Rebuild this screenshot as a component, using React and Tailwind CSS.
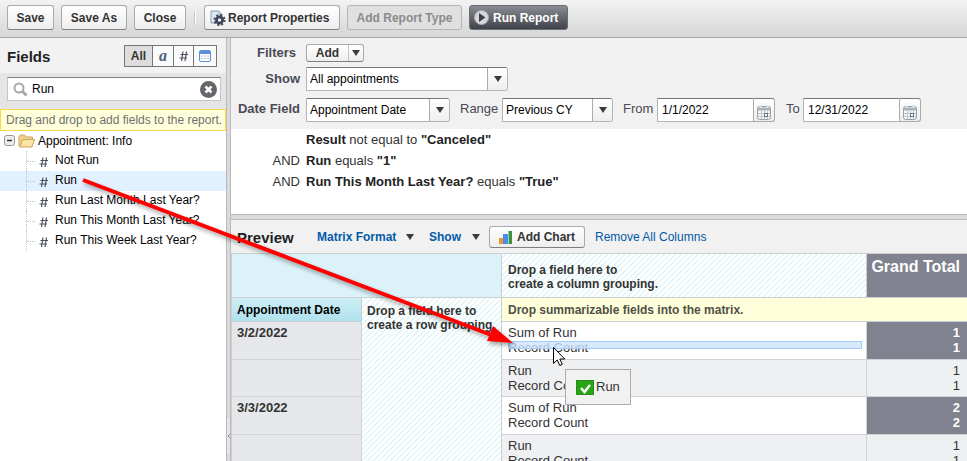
import { ChevronLeft } from 'lucide-react'

const fields = [
  'Not Run',
  'Run',
  'Run Last Month Last Year?',
  'Run This Month Last Year?',
  'Run This Week Last Year?'
]

const conditions = [
  { join: '', field: 'Result', op: 'not equal to', value: '"Canceled"' },
  { join: 'AND', field: 'Run', op: 'equals', value: '"1"' },
  { join: 'AND', field: 'Run This Month Last Year?', op: 'equals', value: '"True"' }
]

const rows = [
  { date: '3/2/2022', lines: ['Sum of Run', 'Record Count'], totals: [1, 1], summary: true, dropTarget: true },
  { date: '', lines: ['Run', 'Record Count'], totals: [1, 1] },
  { date: '3/3/2022', lines: ['Sum of Run', 'Record Count'], totals: [2, 2], summary: true },
  { date: '', lines: ['Run', 'Record Count'], totals: [1, 1] }
]

const hatch = 'bg-[repeating-linear-gradient(135deg,#ffffff_0px,#ffffff_2px,#d5f1f6_3px,#ffffff_4px)]'

function Caret() {
  return (
    <svg width="8" height="6" viewBox="0 0 8 6" className="shrink-0">
      <path d="M0 0h8L4 6z" fill="#3b3b3f" />
    </svg>
  )
}

function Hash() {
  return (
    <svg width="10" height="12" viewBox="0 0 10 12" className="shrink-0">
      <path d="M4 1.500L2.500 11M7.500 1.500L6 11M1.500 4.500H9M.5 8H8" stroke="#4a5160" strokeWidth="1.200" fill="none" />
    </svg>
  )
}

function PropertiesIcon() {
  return (
    <svg width="16" height="16" viewBox="0 0 16 16">
      <path d="M1 1h8l3 3v9H1z" fill="#dce8f3" stroke="#8fa0b2" />
      <path d="M9 1v3h3" fill="#fff" stroke="#8fa0b2" />
      <circle cx="9.500" cy="10" r="5" fill="none" stroke="#414757" strokeWidth="2" strokeDasharray="2 1.930" />
      <circle cx="9.500" cy="10" r="3" fill="none" stroke="#414757" strokeWidth="3" />
      <circle cx="9.500" cy="10" r="1.600" fill="#f3f4f6" />
    </svg>
  )
}

function CalendarIcon() {
  return (
    <svg width="14" height="15" viewBox="0 0 14 15">
      <rect x=".5" y="1.500" width="13" height="13" rx="2" fill="#f3f5f7" stroke="#98a0a8" />
      <path d="M1 2.500h12v3H1z" fill="#a9b1b9" />
      <path d="M3.500 0v3M10.500 0v3" stroke="#dfe5e9" strokeWidth="2" />
      <path d="M1 8.500h12M1 11.500h12M4.500 6v8M7.500 6v8M10.500 6v8" stroke="#b9c8d1" />
      <rect x="7.500" y="8.500" width="3" height="3" fill="#fff" stroke="#6e757c" />
    </svg>
  )
}

function ToolButton({ className = '', disabled = false, children }) {
  const look = disabled
    ? 'border-[#b5b5b5] bg-[#e0e0e0] text-[#8b8b8b]'
    : 'border-[#a9a9ab] border-b-[#7f7f7f] bg-linear-to-b from-white to-[#eeeeef] text-[#333333]'

  return (
    <button
      disabled={disabled}
      className={`h-[25px] shrink-0 rounded-[3px] border text-center text-xs font-bold whitespace-nowrap ${look} ${className}`}
    >
      {children}
    </button>
  )
}

function Select({ id, value, className }) {
  return (
    <div className={`relative h-6 shrink-0 ${className}`}>
      <select
        id={id}
        defaultValue={value}
        className="h-full w-full appearance-none rounded-r-[3px] border border-[#b5b5b8] border-t-[#77777b] bg-white pr-6 pl-[3px] text-xs text-black"
      >
        <option>{value}</option>
      </select>
      <span className="pointer-events-none absolute inset-y-px right-px flex w-5 items-center justify-center rounded-r-[2px] border-l border-[#aaaaad] bg-linear-to-b from-white to-[#eeeeee]">
        <Caret />
      </span>
    </div>
  )
}

function DateInput({ id, value }) {
  return (
    <div className="flex h-6 w-[118px] shrink-0">
      <input
        id={id}
        defaultValue={value}
        className="min-w-0 flex-1 border border-r-0 border-[#b5b5b8] border-t-[#77777b] bg-white pl-1 text-xs text-black"
      />
      <button
        aria-label="Pick a date"
        className="flex w-[22px] items-center justify-center rounded-r-[3px] border border-[#aaaaad] border-t-[#77777b] bg-linear-to-b from-white to-[#eeeeee] pt-1"
      >
        <CalendarIcon />
      </button>
    </div>
  )
}

function Toolbar() {
  return (
    <header className="flex h-[38px] shrink-0 items-start gap-[7px] border-b border-[#a9a9a9] bg-linear-to-b from-[#f3f3f3] to-[#d6d6d6] px-[7px] pt-[5px]">
      <ToolButton className="w-[47px]">Save</ToolButton>
      <ToolButton className="w-[66px]">Save As</ToolButton>
      <ToolButton className="w-[52px]">Close</ToolButton>
      <span className="mx-px mt-[6px] h-[14px] w-[2px] border-r border-white bg-[#c5c5c5]" />
      <ToolButton className="flex w-[136px] items-center gap-[2px] pl-[5px]">
        <PropertiesIcon />
        Report Properties
      </ToolButton>
      <ToolButton disabled className="w-[115px]">Add Report Type</ToolButton>
      <button className="flex h-[25px] w-[99px] shrink-0 items-center gap-1 rounded-[3px] border border-[#6b6d74] bg-linear-to-b from-[#8b8d96] to-[#41434a] pl-1 text-xs font-bold whitespace-nowrap text-white">
        <svg width="15" height="15" viewBox="0 0 15 15">
          <circle cx="7.500" cy="7.500" r="7" fill="#d8d8da" stroke="#a5a6ab" />
          <path d="M5 3l6.500 4.500L5 12z" fill="#3f4148" />
        </svg>
        Run Report
      </button>
    </header>
  )
}

function FieldsPanel() {
  return (
    <aside className="flex w-[226px] shrink-0 flex-col bg-white">
      <div className="flex h-[35px] items-center justify-between bg-[#f2f2f2] pr-[9px] pl-[7px]">
        <h2 className="pt-1 text-[15px] font-bold text-[#222222]">Fields</h2>
        <div className="flex h-[22px] divide-x divide-[#77777b] border border-[#77777b] bg-[#fafafa] text-xs font-bold text-[#333333]">
          <button className="w-7 bg-[#dddddd]">All</button>
          <button className="w-[21px] font-['Liberation_Serif',serif] text-base leading-4 text-[#4c6078] italic">a</button>
          <button aria-label="Number fields" className="flex w-5 items-center justify-center">
            <Hash />
          </button>
          <button aria-label="Date fields" className="flex w-[22px] items-center justify-center">
            <svg width="12" height="12" viewBox="0 0 12 12">
              <rect x=".5" y=".5" width="11" height="11" rx="1.500" fill="#fff" stroke="#5d8fd4" />
              <path d="M1 1h10v3H1z" fill="#5d8fd4" />
              <path d="M2 6h8M2 8.500h8" stroke="#b5bfcd" strokeDasharray="2 1" />
            </svg>
          </button>
        </div>
      </div>

      <div className="h-9 bg-[#e5e5e5] px-[7px] pt-1 pr-[5px]">
        <label className="flex h-6 items-center gap-1 border border-[#c5c5c5] border-t-[#808080] bg-white px-[5px]">
          <svg width="15" height="15" viewBox="0 0 15 15" fill="none" stroke="#a5a9a6">
            <circle cx="6" cy="6" r="4.500" strokeWidth="2" />
            <path d="M9.500 9.500l4 4" strokeWidth="3" />
          </svg>
          <input aria-label="Search fields" defaultValue="Run" className="min-w-0 flex-1 text-xs text-black" />
          <button aria-label="Clear search" className="-mr-[2px]">
            <svg width="17" height="17" viewBox="0 0 17 17">
              <circle cx="8.500" cy="8.500" r="8.500" fill="#66666c" />
              <path d="M5.500 5.500l6 6M11.500 5.500l-6 6" stroke="#fff" strokeWidth="2.500" />
            </svg>
          </button>
        </label>
      </div>

      <p className="h-[22px] border border-[#fad74b] bg-[#ffffdc] pl-[5px] text-xs leading-5 whitespace-nowrap text-[#707070]">
        Drag and drop to add fields to the report.
      </p>

      <div className="flex h-5 items-center pl-1">
        <svg width="12" height="12" viewBox="0 0 12 12">
          <rect x=".5" y=".5" width="10" height="10" rx="2" fill="#ececec" stroke="#989898" />
          <path d="M3 5.500h5" stroke="#2f3644" strokeWidth="1.500" />
        </svg>
        <svg width="17" height="14" viewBox="0 0 17 14" className="ml-[2px]">
          <path d="M1 12.500V2.500L2.500 1h4L8 3h6.500v4" fill="#f0d190" stroke="#d0a557" />
          <path d="M2 13L4.500 5.500h12L14 13z" fill="#fae3a6" stroke="#d0a557" />
        </svg>
        <span className="ml-[3px] text-xs text-black">Appointment: Info</span>
      </div>
      <ul>
        {fields.map((name) => (
          <li key={name} className={`flex h-5 items-center pl-[26px] ${name === 'Run' ? 'bg-[#e2f1ff]' : ''}`}>
            <span className="h-full border-l border-dotted border-[#c5c5c5]" />
            <span className="w-2 border-t border-dotted border-[#c5c5c5]" />
            <span className="ml-1 flex pt-[2px]">
              <Hash />
            </span>
            <span className="ml-[6px] pb-[2px] text-xs whitespace-nowrap text-black">{name}</span>
          </li>
        ))}
      </ul>
    </aside>
  )
}

function Filters() {
  return (
    <section className="h-44 shrink-0 bg-white">
      <div className="flex h-[91px] flex-col bg-[#f1f1f1] pt-[6px] text-[13px] text-[#4a4a56]">
        <div className="flex h-[23px] items-start gap-[6px]">
          <span className="w-[69px] pr-1 text-right leading-[18px] font-bold">Filters</span>
          <button className="flex h-[18px] w-[58px] rounded-[3px] border border-[#a9a9ab] border-b-[#7f7f7f] bg-linear-to-b from-white to-[#eeeeef] text-xs font-bold text-[#333333]">
            <span className="flex-1 leading-4">Add</span>
            <span className="flex h-full w-[15px] items-center justify-center border-l border-[#c5c5c5]">
              <Caret />
            </span>
          </button>
        </div>
        <div className="flex h-[31px] gap-[6px]">
          <label htmlFor="show" className="w-[69px] text-right leading-[23px] font-bold">Show</label>
          <Select id="show" value="All appointments" className="w-[202px]" />
        </div>
        <div className="flex">
          <label htmlFor="date-field" className="w-[69px] text-right leading-[22px] font-bold whitespace-nowrap">Date Field</label>
          <Select id="date-field" value="Appointment Date" className="ml-[6px] w-36" />
          <label htmlFor="range" className="ml-[10px] w-[42px] leading-[22px]">Range</label>
          <Select id="range" value="Previous CY" className="w-[111px]" />
          <label htmlFor="from" className="ml-[10px] w-[34px] leading-[22px]">From</label>
          <DateInput id="from" value="1/1/2022" />
          <label htmlFor="to" className="ml-[11px] w-[17px] leading-[22px]">To</label>
          <DateInput id="to" value="12/31/2022" />
        </div>
      </div>
      <ul className="text-[13px] text-[#333333]">
        {conditions.map((c) => (
          <li key={c.field} className="flex h-[21px] items-center gap-[6px] whitespace-nowrap">
            <span className="w-[69px] text-right">{c.join}</span>
            <span>
              <b className="text-[#222222]">{c.field}</b> {c.op} <b className="text-[#222222]">{c.value}</b>
            </span>
          </li>
        ))}
      </ul>
    </section>
  )
}

function PreviewBar() {
  return (
    <div className="flex h-[33px] shrink-0 items-center bg-[#f1f1f1] pl-[6px] text-xs whitespace-nowrap">
      <h2 className="w-20 pt-[2px] text-[15px] font-bold text-[#222222]">Preview</h2>
      <button className="flex w-28 items-center gap-[10px] font-bold text-[#015ba7]">
        Matrix Format <Caret />
      </button>
      <button className="flex w-[60px] items-center gap-[11px] font-bold text-[#015ba7]">
        Show <Caret />
      </button>
      <button className="flex h-[22px] w-24 items-center gap-1 rounded-[3px] border border-[#a9a9ab] border-b-[#7f7f7f] bg-linear-to-b from-white to-[#eeeeef] pl-[9px] font-bold text-[#333333]">
        <svg width="14" height="14" viewBox="0 0 14 14" className="shrink-0">
          <path d="M0 8h4v6H0z" fill="#e99a24" />
          <path d="M4 4h5v10H4z" fill="#4a8cf0" />
          <path d="M9 1h4v13H9z" fill="#3f9142" />
          <path d="M9 1h1v13H9z" fill="#9fd0a0" />
        </svg>
        Add Chart
      </button>
      <a href="#" className="ml-[10px] text-[#015ba7]">Remove All Columns</a>
    </div>
  )
}

function Matrix() {
  return (
    <table className="w-full table-fixed border-separate border-spacing-0 border-t border-l border-[#c9cfd3] text-[13px] leading-[15px] text-[#333333]">
      <colgroup>
        <col className="w-[130px]" />
        <col className="w-[140px]" />
        <col />
        <col className="w-[100px]" />
      </colgroup>
      <tbody>
        <tr className="h-11 text-left align-top">
          <td colSpan={2} className="border-r border-b border-[#c9cfd3] bg-[#daf2f8]" />
          <th className={`border-r border-b border-[#c9cfd3] px-[6px] pt-[9px] text-xs leading-[14px] ${hatch}`}>
            Drop a field here to
            <br />
            create a column grouping.
          </th>
          <th className="border-b border-[#c9cfd3] bg-[#80828f] pt-1 pr-[7px] text-right text-base leading-[18px] whitespace-nowrap text-white">
            Grand Total
          </th>
        </tr>
        <tr className="h-6 text-left text-xs">
          <th className="border-r border-b border-[#c9cfd3] bg-linear-to-b from-[#cdeef5] to-[#b0e1ee] px-[5px] text-black">
            Appointment Date
          </th>
          {/* row grouping drop zone runs down the whole table */}
          <th rowSpan={rows.length + 1} className={`border-r border-[#c9cfd3] px-[5px] pt-[6px] align-top leading-[14px] whitespace-nowrap ${hatch}`}>
            Drop a field here to
            <br />
            create a row grouping.
          </th>
          <th colSpan={2} className="border-b border-[#c9cfd3] bg-[#ffffdc] px-[6px] text-[#505046]">
            Drop summarizable fields into the matrix.
          </th>
        </tr>
        {rows.map((row, i) => (
          <tr key={i} className={`align-top ${row.summary ? 'h-[38px] bg-white' : 'h-[37px] bg-[#eff0f2]'}`}>
            <td className="border-r border-b border-[#d0d4d9] bg-[#e6e7eb] px-[5px] pt-[3px] font-bold">{row.date}</td>
            <td className="relative border-r border-b border-[#d0d4d9] px-[6px] py-[3px]">
              {row.lines.map((line) => (
                <div key={line}>{line}</div>
              ))}
              {row.dropTarget && (
                <div className="absolute top-[19px] right-1 left-[6px] h-2 border border-[#a3cdf8] bg-[#cde4fd]/80" />
              )}
            </td>
            <td className={`border-b border-[#d0d4d9] py-[3px] pr-[7px] text-right ${row.summary ? 'bg-[#80828f] font-bold text-white' : ''}`}>
              {row.totals.map((total, j) => (
                <div key={j}>{total}</div>
              ))}
            </td>
          </tr>
        ))}
      </tbody>
    </table>
  )
}

function DragOverlay() {
  return (
    <>
      <svg width="520" height="360" viewBox="0 0 520 360" className="pointer-events-none absolute top-0 left-0 drop-shadow-[2px_3px_2px_rgba(0,0,0,0.35)]">
        <path d="M83 180L494 336" stroke="#ff0000" strokeWidth="4" />
        <path d="M513 343L487 341L493 326z" fill="#ff0000" />
      </svg>
      <div className="absolute top-[369px] left-[565px] flex h-9 w-[66px] items-center gap-[2px] border border-[#ababab] bg-[#f1f1f1] pl-[10px] text-[13px] text-[#333333]">
        <svg width="18" height="15" viewBox="0 0 18 15">
          <path d="M0 0h18v15H0z" fill="#27a414" />
          <path d="M.5.5h17v14H.5z" fill="none" stroke="#2a8d1b" />
          <path d="M5 8l3.500 4L14 5" fill="none" stroke="#fff" strokeWidth="2.500" />
        </svg>
        Run
      </div>
      <svg width="13" height="20" viewBox="0 0 13 20" className="pointer-events-none absolute top-[347px] left-[553px]">
        <path d="M.5.5v16l3.700-3.500 2.600 5.500 2.500-1.200-2.500-5.300h5z" fill="#fff" stroke="#000" />
      </svg>
    </>
  )
}

export default function App() {
  return (
    <div className="relative flex h-screen flex-col overflow-hidden bg-white font-['Liberation_Sans',Arial,sans-serif]">
      <Toolbar />
      <div className="flex min-h-0 flex-1">
        <FieldsPanel />
        <div className="flex w-[5px] shrink-0 flex-col border-x border-[#bbbbbb] bg-[#dadada] pt-[380px]">
          <button aria-label="Collapse fields" className="flex h-9 w-[3px] items-center justify-center bg-[#e6e6e6]">
            <ChevronLeft size={8} className="shrink-0" color="#66666c" />
          </button>
        </div>
        <main className="flex min-w-0 flex-1 flex-col overflow-hidden">
          <Filters />
          <div className="h-[6px] shrink-0 border-y border-[#bbbbbb] bg-[#dadada]" />
          <PreviewBar />
          <Matrix />
        </main>
      </div>
      <DragOverlay />
    </div>
  )
}
